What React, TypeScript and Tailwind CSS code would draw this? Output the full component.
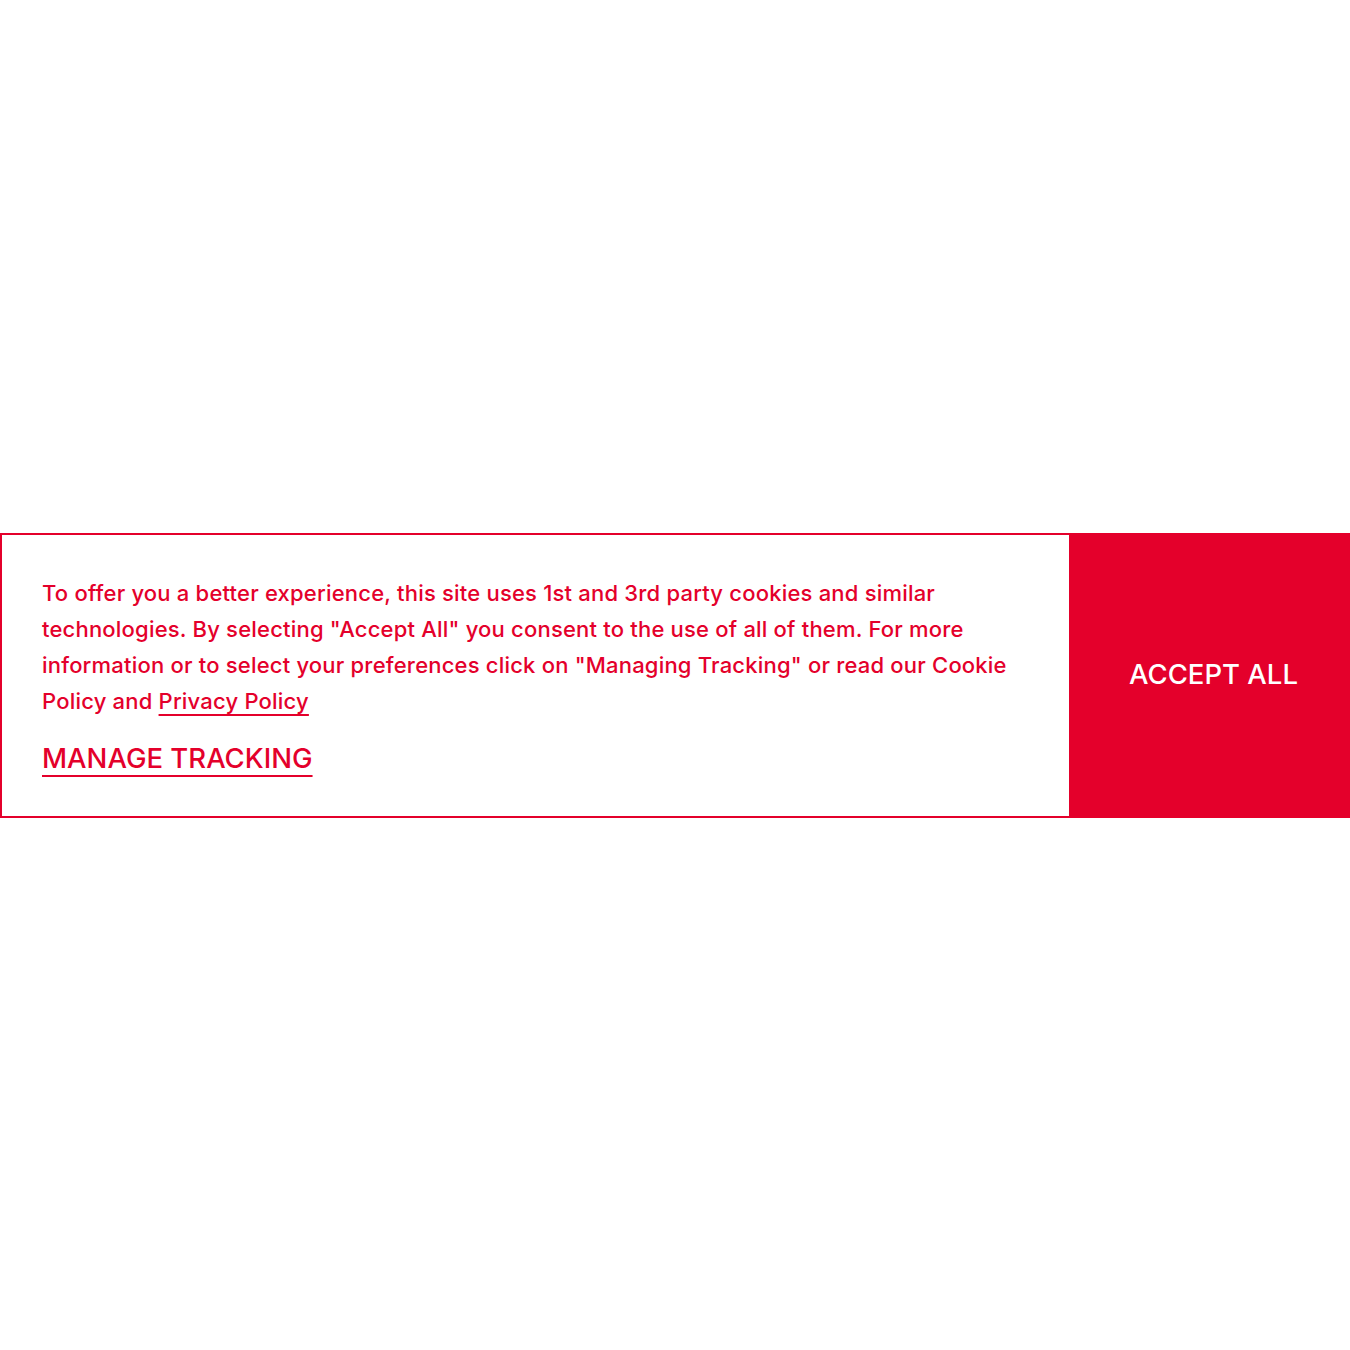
export default function App() {
  return (
    <div className="min-h-screen bg-white flex items-center" style={{ fontFamily: "Inter, 'Noto Sans', sans-serif" }}>
      {/* Cookie banner */}
      <div className="w-full flex border-2 border-[#e4002b] bg-white">
        <div className="flex-1 px-10 pt-[40px] pb-[41px]">
          <p className="text-[22px] leading-[36px] text-[#e4002b] font-medium tracking-[0.2px] max-w-[990px]">
            To offer you a better experience, this site uses 1st and 3rd party cookies and similar
            technologies. By selecting "Accept All" you consent to the use of all of them. For more
            information or to select your preferences click on "Managing Tracking" or read our Cookie
            Policy and{" "}
            <a href="#" className="underline decoration-2 underline-offset-[5px]">
              Privacy Policy
            </a>
          </p>
          <a
            href="#"
            className="inline-block mt-[22px] text-[27.5px] leading-[34px] text-[#e4002b] font-medium underline decoration-2 underline-offset-[7px]"
          >
            MANAGE TRACKING
          </a>
        </div>
        <button className="w-[281px] -my-[2px] -mr-[2px] pl-2 bg-[#e4002b] text-white text-[27.5px] font-medium">
          ACCEPT ALL
        </button>
      </div>
    </div>
  );
}
